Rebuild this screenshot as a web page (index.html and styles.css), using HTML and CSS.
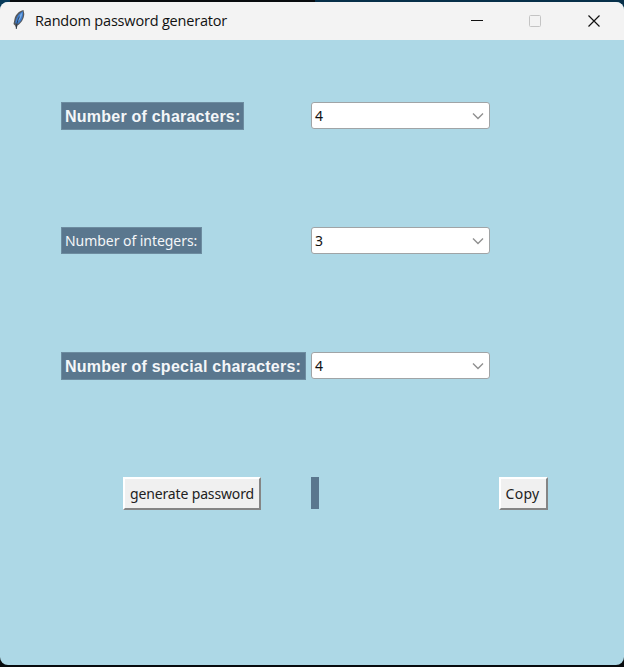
FILE: index.html
```html
<!DOCTYPE html>
<html lang="en">
<head>
<meta charset="utf-8">
<title>Random password generator</title>
<link rel="stylesheet" href="styles.css">
</head>
<body>
<div class="window">
  <header class="titlebar">
    <svg class="feather" width="14" height="20" viewBox="0 0 14 20">
      <path d="M11.500 0C7 1 3.500 4.500 2.500 9L1.500 14l1.500 1.500L4.500 19l1-3.500C9 13.500 12 9 12.300 4z" fill="#55585c"/>
      <path d="M11 1.300C7 3 4 7 3.300 13L5.200 14.300C9.500 12 11.500 7 11 1.300z" fill="#3d7ccb"/>
      <path d="M10.300 2.500C7.500 4.500 6.500 8 6 11.500C8.500 9.500 10.300 6 10.300 2.500z" fill="#78abe5"/>
      <path d="M4.300 19C4.300 15 5.300 11 7.500 6.500" fill="none" stroke="#26313f" stroke-width=".8"/>
    </svg>
    <span class="title">Random password generator</span>
    <div class="controls">
      <svg width="58" height="38" viewBox="0 0 58 38"><path d="M13 18.500h12" stroke="#111" fill="none"/></svg>
      <svg width="58" height="38" viewBox="0 0 58 38"><rect x="13.500" y="13.500" width="11" height="11" rx="1" stroke="#c4c4c4" fill="none"/></svg>
      <svg width="50" height="38" viewBox="0 0 50 38"><path d="M14.500 13.500l11 11m0-11l-11 11" stroke="#111" stroke-width="1.200" fill="none"/></svg>
    </div>
  </header>
  <main class="form">
    <span class="label bold">Number of characters:</span>
    <div class="combo"><span>4</span><svg width="12" height="8" viewBox="0 0 12 8"><path d="M1 1.500l5 5 5-5" /></svg></div>

    <span class="label">Number of integers:</span>
    <div class="combo"><span>3</span><svg width="12" height="8" viewBox="0 0 12 8"><path d="M1 1.500l5 5 5-5" /></svg></div>

    <span class="label bold wide">Number of special characters:</span>
    <div class="combo"><span>4</span><svg width="12" height="8" viewBox="0 0 12 8"><path d="M1 1.500l5 5 5-5" /></svg></div>

    <button class="button generate">generate password</button>
    <div class="output"></div>
    <button class="button copy">Copy</button>
  </main>
</div>
</body>
</html>
```
FILE: styles.css
```css
* { box-sizing: border-box; }
body {
  margin: 0;
  height: 667px;
  padding: 2px 0;
  overflow: hidden;
  background: linear-gradient(90deg, #073a5a 0, #073a5a 10px, #080b0e 10px, #080b0e 315px, #062f49 315px) 0 0 / 100% 12px no-repeat #080b0e;
  font-family: "Noto Sans", "Open Sans", sans-serif;
  color: #111;
}
.window {
  height: 663px;
  border-radius: 8px;
  overflow: hidden;
  background: #add8e6;
}
.titlebar {
  display: flex;
  align-items: center;
  height: 38px;
  padding-left: 12px;
  background: #f3f3f3;
}
.feather { margin-top: -2px; }
.title {
  margin-left: 9px;
  font-family: "Open Sans", sans-serif;
  font-size: 14.500px;
  letter-spacing: -0.190px;
  line-height: 20px;
  white-space: nowrap;
}
.controls { display: flex; margin-left: auto; }
.form {
  display: grid;
  grid-template-columns: 250px 188px 1fr;
  grid-auto-rows: 125px;
  align-items: start;
  justify-items: start;
  padding: 62px 0 0 61px;
}
.label {
  display: flex;
  align-items: center;
  grid-column: 1;
  width: 141px;
  height: 27px;
  padding-left: 3px;
  border: 1px solid #6d8ca0;
  background: #5a778e;
  color: #f4f6f8;
  font-size: 14px;
  letter-spacing: -0.050px;
  white-space: nowrap;
}
.label.bold {
  width: 183px;
  height: 28px;
  padding-top: 2px;
  font: bold 16px "Liberation Sans", sans-serif;
  letter-spacing: 0.230px;
}
.label.wide { width: 245px; }
.combo {
  display: flex;
  align-items: center;
  justify-content: space-between;
  grid-column: 2;
  width: 179px;
  height: 27px;
  padding: 0 5px 0 3px;
  border: 1px solid #a0a4a6;
  border-radius: 3px;
  background: #fff;
  font-size: 14px;
}
.combo path { fill: none; stroke: #909090; stroke-width: 1.400; }
.button {
  height: 33px;
  padding: 0;
  border: 2px solid;
  border-color: #fff #858585 #858585 #fff;
  background: #f0f0f0;
  color: #222;
  font: 14px/20px "Noto Sans", "Open Sans", sans-serif;
  letter-spacing: -0.150px;
  white-space: nowrap;
}
.generate { grid-column: 1; width: 138px; margin-left: 62px; }
.output { grid-column: 2; width: 8px; height: 32px; background: #5a778e; }
.copy { grid-column: 3; width: 49px; padding-right: 2px; letter-spacing: 0.300px; }
```
